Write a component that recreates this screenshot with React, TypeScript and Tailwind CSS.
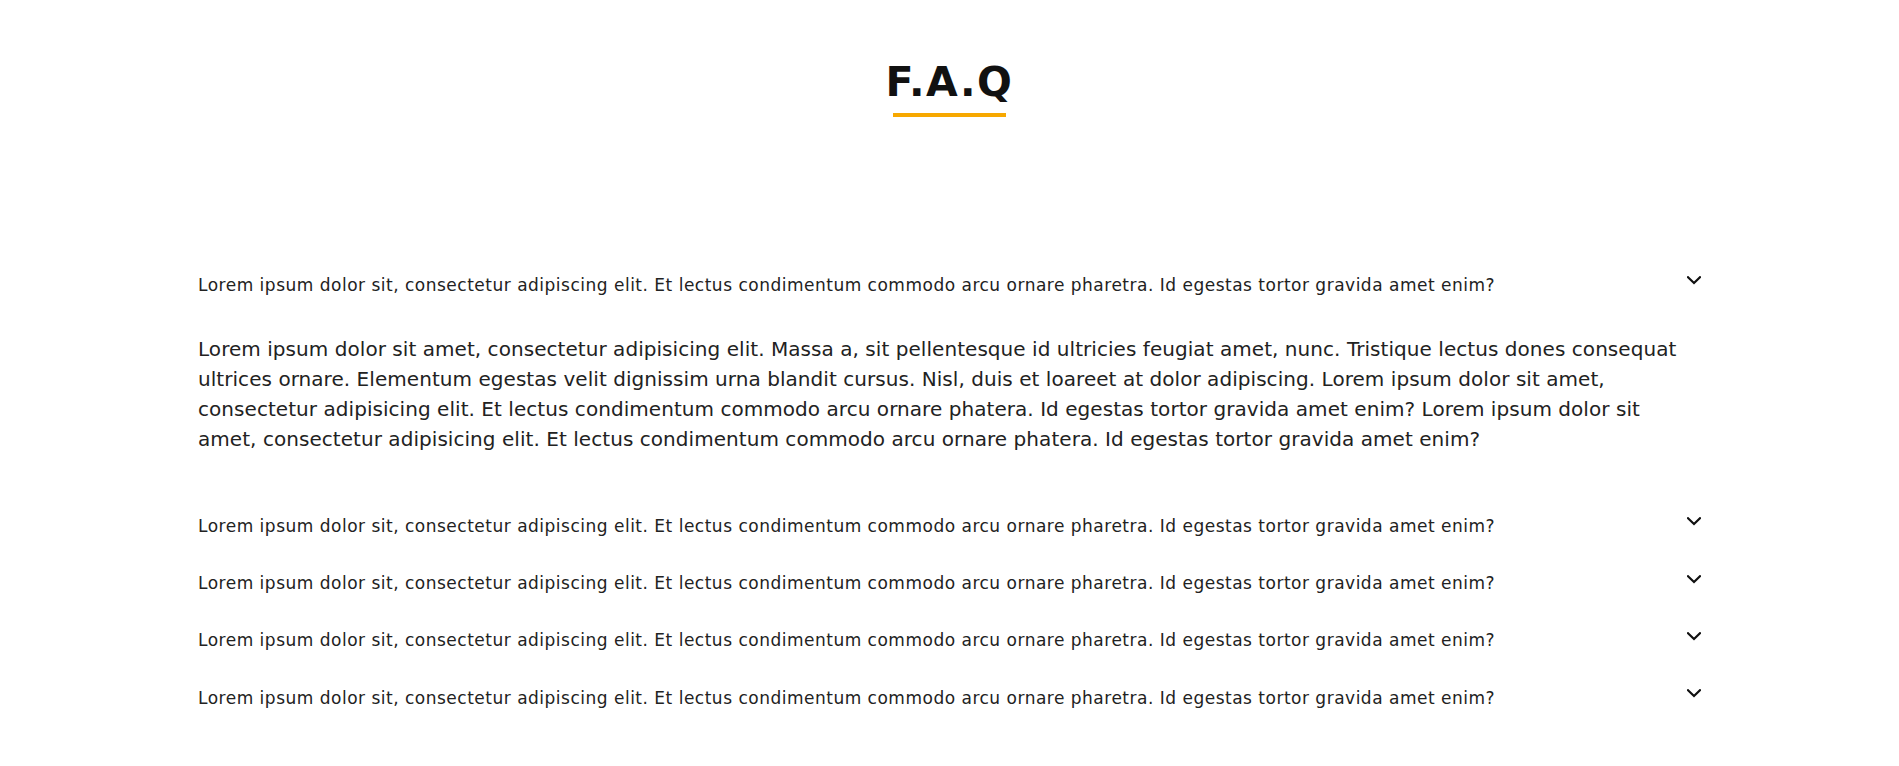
import React from "react";

const Q =
  "Lorem ipsum dolor sit, consectetur adipiscing elit. Et lectus condimentum commodo arcu ornare pharetra. Id egestas tortor gravida amet enim?";

function Chevron() {
  return (
    <svg width="14" height="9" viewBox="0 0 14 9" fill="none" className="mb-[8px] shrink-0">
      <path d="M1 1.2 L7 7 L13 1.2" stroke="#111" strokeWidth="2.2" strokeLinecap="square" />
    </svg>
  );
}

function Row() {
  return (
    <div className="flex h-[57.33px] items-center justify-between">
      <span className="text-[17px] leading-[24px] tracking-[0.5px] text-[#222]">{Q}</span>
      <Chevron />
    </div>
  );
}

export default function App() {
  return (
    <div
      className="min-h-[766px] bg-white text-[#222]"
      style={{ fontFamily: "'DejaVu Sans', sans-serif" }}
    >
      <div className="flex flex-col items-center pt-[58px]">
        <h1 className="text-[41px] leading-[48px] font-bold tracking-[1.5px] text-[#111]">F.A.Q</h1>
        <div className="mt-[7px] h-[4px] w-[113px] bg-[#f7a800]" />
      </div>
      <div className="mx-auto mt-[139px] w-[1503px]">
        <Row />
        <p className="mt-[20.7px] text-[20px] leading-[30px] tracking-[0.05px] text-[#222]">
          Lorem ipsum dolor sit amet, consectetur adipisicing elit. Massa a, sit pellentesque id ultricies feugiat amet, nunc. Tristique lectus dones consequat
          <br />
          ultrices ornare. Elementum egestas velit dignissim urna blandit cursus. Nisl, duis et loareet at dolor adipiscing. Lorem ipsum dolor sit amet,
          <br />
          consectetur adipisicing elit. Et lectus condimentum commodo arcu ornare phatera. Id egestas tortor gravida amet enim? Lorem ipsum dolor sit
          <br />
          amet, consectetur adipisicing elit. Et lectus condimentum commodo arcu ornare phatera. Id egestas tortor gravida amet enim?
        </p>
        <div className="mt-[43px]">
          <Row />
          <Row />
          <Row />
          <Row />
        </div>
      </div>
    </div>
  );
}
